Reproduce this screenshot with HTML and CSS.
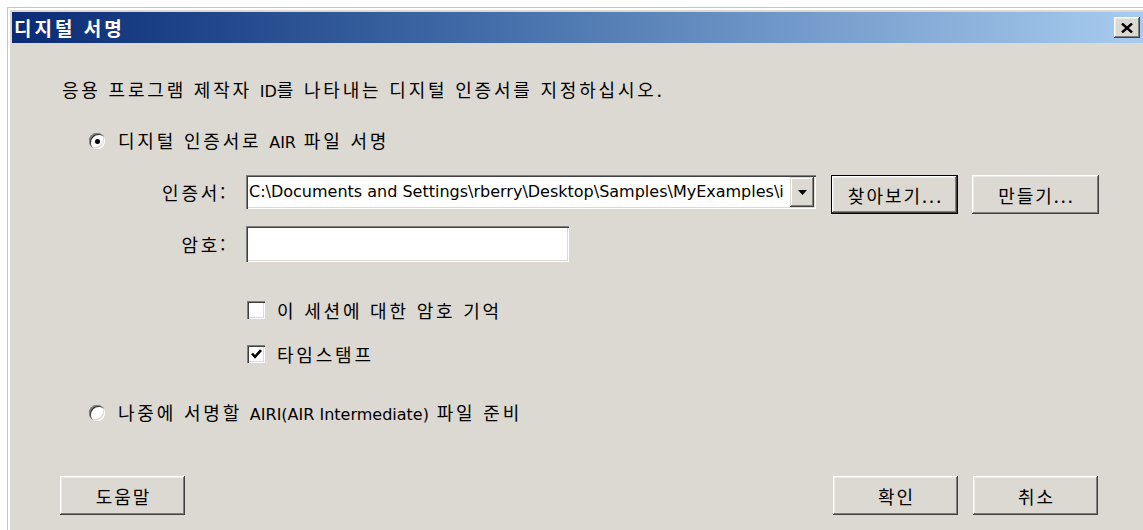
FILE: index.html
```html
<!DOCTYPE html>
<html lang="ko">
<head>
<meta charset="utf-8">
<title>디지털 서명</title>
<link rel="stylesheet" href="styles.css">
</head>
<body>
<div class="window">
  <div class="titlebar">
    <span class="title">디지털 서명</span>
    <button class="close" type="button" aria-label="닫기">
      <svg width="12" height="10" viewBox="0 0 12 10"><path d="M1 0.5 L11 9.5 M11 0.5 L1 9.5" stroke="#000" stroke-width="2.4" fill="none"/></svg>
    </button>
  </div>
  <div class="content">
    <p class="intro">응용 프로그램 제작자 <span class="lat">ID</span>를 나타내는 디지털 인증서를 지정하십시오.</p>

    <div class="option first">
      <span class="radio checked"></span>
      <span>디지털 인증서로 <span class="lat">AIR</span> 파일 서명</span>
    </div>

    <div class="field-row cert">
      <span class="field-label">인증서:</span>
      <div class="combo">
        <span class="combo-text">C:\Documents and Settings\rberry\Desktop\Samples\MyExamples\i</span>
        <span class="combo-btn">
          <svg width="9" height="5" viewBox="0 0 9 5"><path d="M0 0 H9 L4.5 5 Z" fill="#000"/></svg>
        </span>
      </div>
      <button class="btn default" type="button">찾아보기...</button>
      <button class="btn" type="button">만들기...</button>
    </div>

    <div class="field-row pw">
      <span class="field-label">암호:</span>
      <div class="textbox"></div>
    </div>

    <div class="check-row first">
      <span class="checkbox"></span>
      <span>이 세션에 대한 암호 기억</span>
    </div>
    <div class="check-row second">
      <span class="checkbox checked">
        <svg width="11" height="10" viewBox="0 0 11 10"><path d="M1 4.5 L4 7.8 L10 1.2" stroke="#000" stroke-width="2.6" fill="none"/></svg>
      </span>
      <span>타임스탬프</span>
    </div>

    <div class="option second">
      <span class="radio"></span>
      <span>나중에 서명할 <span class="lat">AIRI(AIR Intermediate)</span> 파일 준비</span>
    </div>

    <div class="actions">
      <button class="btn wide" type="button">도움말</button>
      <div class="actions-right">
        <button class="btn wide" type="button">확인</button>
        <button class="btn wide" type="button">취소</button>
      </div>
    </div>
  </div>
</div>
</body>
</html>
```

FILE: styles.css
```css
html, body {
  margin: 0;
  height: 530px;
  overflow: hidden;
  background: #ffffff;
}

body {
  font-family: "Noto Sans CJK KR", "DejaVu Sans", sans-serif;
  color: #000;
}

/* classic window frame */
.window {
  margin: 7px 0 0 7px;
  width: 1131px;
  height: 540px;
  border-top: 1px solid #c9c5be;
  border-left: 1px solid #c9c5be;
  box-shadow: inset 2px 2px #ffffff;
  padding: 4px 4px 0 4px;
  background: #dcd8d2;
}

.titlebar {
  height: 31px;
  display: flex;
  align-items: center;
  justify-content: space-between;
  padding: 0 3px 0 2px;
  background: linear-gradient(to right, #0a2b75 0%, #3f6aa6 40%, #a8ccef 100%);
}

.title {
  color: #fff;
  font-size: 19px;
  font-weight: bold;
  letter-spacing: 3px;
  line-height: 20px;
}

.close {
  width: 26px;
  height: 21px;
  padding: 0;
  border: none;
  display: flex;
  align-items: center;
  justify-content: center;
  background: #dcd8d2;
  box-shadow: inset -1px -1px #404040, inset 1px 1px #ffffff, inset -2px -2px #808080, inset 2px 2px #eceae6;
}

/* dialog body */
.content {
  font-size: 18px;
  letter-spacing: 2.8px;
  line-height: 20px;
}

.lat {
  font-family: "DejaVu Sans", sans-serif;
  font-size: 16px;
  letter-spacing: 0;
}

.intro {
  margin: 36px 0 0 50px;
}

.option {
  display: flex;
  align-items: center;
  gap: 13px;
  margin-left: 77px;
  height: 20px;
}
.option.first { margin-top: 29px; }
.option.second { margin-top: 39px; }

.radio {
  width: 16px;
  height: 16px;
  border-radius: 50%;
  background: #fff;
  box-shadow: inset 1px 1px #8a8782, inset 2px 2px #3c3c3c, inset -1px -1px #ffffff, inset -2px -2px #dcd8d2;
  display: flex;
  align-items: center;
  justify-content: center;
}
.radio.checked::after {
  content: "";
  width: 5px;
  height: 5px;
  border-radius: 50%;
  background: #000;
}

.field-row {
  display: flex;
  align-items: flex-start;
  margin-left: 128px;
}
.field-row.cert { margin-top: 24px; }
.field-row.pw { margin-top: 12px; align-items: center; }

.field-label {
  width: 88px;
  text-align: right;
  margin-right: 18px;
  line-height: 34px;
}
.pw .field-label { line-height: 36px; }

.combo {
  width: 570px;
  height: 34px;
  box-sizing: border-box;
  display: flex;
  align-items: center;
  padding: 2px;
  background: #fff;
  box-shadow: inset 1px 1px #808080, inset 2px 2px #404040, inset -1px -1px #ffffff, inset -2px -2px #dcd8d2;
}

.combo-text {
  flex: 1;
  min-width: 0;
  overflow: hidden;
  white-space: nowrap;
  font-family: "DejaVu Sans", sans-serif;
  font-size: 16px;
  letter-spacing: 0;
  padding-left: 1px;
}

.combo-btn {
  width: 24px;
  flex: none;
  height: 100%;
  display: flex;
  align-items: center;
  justify-content: center;
  background: #dcd8d2;
  box-shadow: inset -1px -1px #404040, inset 1px 1px #dcd8d2, inset -2px -2px #808080, inset 2px 2px #ffffff;
}

.textbox {
  width: 323px;
  height: 36px;
  background: #fff;
  box-shadow: inset 1px 1px #808080, inset 2px 2px #404040, inset -1px -1px #ffffff, inset -2px -2px #dcd8d2;
}

.btn {
  font: inherit;
  color: #000;
  letter-spacing: 2px;
  width: 127px;
  height: 39px;
  margin-left: 14px;
  padding: 0 0 0 2px;
  border: none;
  background: #dcd8d2;
  box-shadow: inset -1px -1px #404040, inset 1px 1px #ffffff, inset -2px -2px #808080, inset 2px 2px #eceae6;
}
.btn.default {
  margin-left: 15px;
  box-shadow: inset 0 0 0 1px #000, inset -2px -2px #404040, inset 2px 2px #ffffff, inset -3px -3px #808080, inset 3px 3px #eceae6;
}
.btn.wide {
  width: 125px;
  margin-left: 0;
}

.check-row {
  display: flex;
  align-items: center;
  gap: 12px;
  margin-left: 235px;
  height: 20px;
}
.check-row.first { margin-top: 38px; }
.check-row.second { margin-top: 24px; }

.checkbox {
  width: 18px;
  height: 18px;
  background: #fff;
  display: flex;
  align-items: center;
  justify-content: center;
  box-shadow: inset 1px 1px #808080, inset 2px 2px #404040, inset -1px -1px #ffffff, inset -2px -2px #dcd8d2;
}

.actions {
  display: flex;
  justify-content: space-between;
  margin-top: 53px;
  padding: 0 45px 0 48px;
}

.actions-right {
  display: flex;
  gap: 15px;
}
```
